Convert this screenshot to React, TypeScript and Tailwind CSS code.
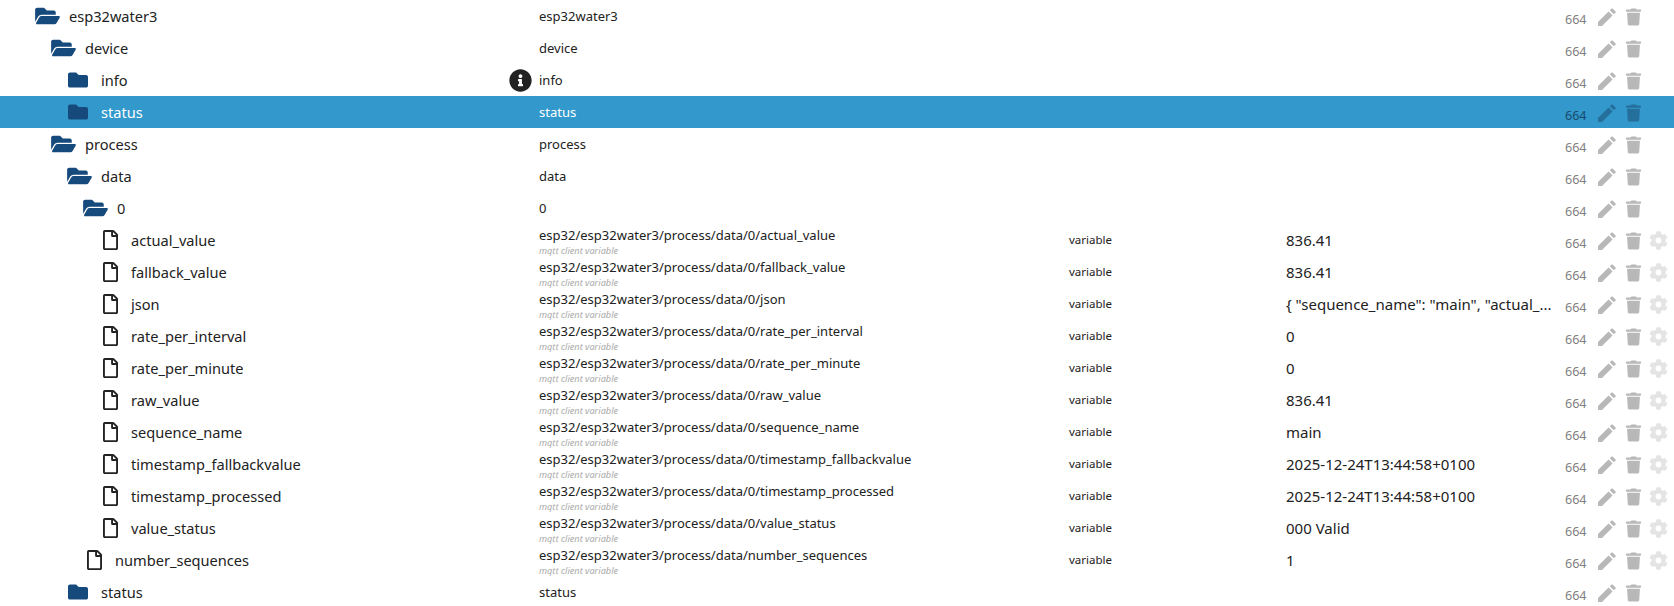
import { FaCog, FaFolder, FaFolderOpen, FaInfoCircle, FaRegFile, FaTrash } from "react-icons/fa";

type Row = {
  name: string;
  indent: string;
  icon: "open" | "closed" | "file";
  id?: string;
  value?: string;
  selected?: boolean;
  info?: boolean;
};

const base = "esp32/esp32water3/process/data/0/";

function leaf(name: string, value: string): Row {
  return { name, indent: "pl-[103px]", icon: "file", id: base + name, value };
}

const rows: Row[] = [
  { name: "esp32water3", indent: "pl-[35px]", icon: "open" },
  { name: "device", indent: "pl-[51px]", icon: "open" },
  { name: "info", indent: "pl-[67px]", icon: "closed", info: true },
  { name: "status", indent: "pl-[67px]", icon: "closed", selected: true },
  { name: "process", indent: "pl-[51px]", icon: "open" },
  { name: "data", indent: "pl-[67px]", icon: "open" },
  { name: "0", indent: "pl-[83px]", icon: "open" },
  leaf("actual_value", "836.41"),
  leaf("fallback_value", "836.41"),
  leaf("json", '{ "sequence_name": "main", "actual_...'),
  leaf("rate_per_interval", "0"),
  leaf("rate_per_minute", "0"),
  leaf("raw_value", "836.41"),
  leaf("sequence_name", "main"),
  leaf("timestamp_fallbackvalue", "2025-12-24T13:44:58+0100"),
  leaf("timestamp_processed", "2025-12-24T13:44:58+0100"),
  leaf("value_status", "000 Valid"),
  {
    name: "number_sequences",
    indent: "pl-[87px]",
    icon: "file",
    id: "esp32/esp32water3/process/data/number_sequences",
    value: "1",
  },
  { name: "status", indent: "pl-[67px]", icon: "closed" },
];

function PencilIcon({ className }: { className: string }) {
  return (
    <svg viewBox="0 0 18 18" fill="currentColor" className={className}>
      <path d="M0 14 L10.6 3.4 L14.6 7.4 L4 18 L0 18 Z" />
      <path d="M11.8 2.2 L13.6 0.4 Q14 0 14.5 0.4 L17.6 3.5 Q18 4 17.6 4.4 L15.8 6.2 Z" />
    </svg>
  );
}

function TreeIcon({ icon }: { icon: Row["icon"] }) {
  if (icon === "file") {
    return (
      <span className="flex w-[28px] shrink-0 justify-start">
        <FaRegFile className="h-[20px] w-[15px] text-[#222]" />
      </span>
    );
  }
  return (
    <span className="flex w-[34px] shrink-0 justify-start">
      {icon === "open" ? (
        <FaFolderOpen className="h-[22px] w-[25px] text-[#164a7c]" />
      ) : (
        <FaFolder className="h-[20px] w-[22px] text-[#164a7c]" />
      )}
    </span>
  );
}

function TreeRow({ row }: { row: Row }) {
  const muted = row.selected ? "text-[#246f9c]" : "text-[#b8b8b8]";
  return (
    <div className={row.selected ? "flex h-8 items-center bg-[#3399cc] text-white" : "flex h-8 items-center text-[#222]"}>
      <div className={`flex w-[539px] shrink-0 items-center pr-[7px] text-[14.6px] ${row.indent}`}>
        <TreeIcon icon={row.icon} />
        <span className="pt-[1px]">{row.name}</span>
        {row.info && <FaInfoCircle className="ml-auto h-[23px] w-[23px] text-[#222]" />}
      </div>
      <div className="w-[530px] shrink-0 text-[13px]">
        {row.id ? (
          <div className="h-8 pt-[3px]">
            <div className="leading-[16px]">{row.id}</div>
            <div className="text-[9.2px] italic leading-[16px] text-[#aaa]">mqtt client variable</div>
          </div>
        ) : (
          <div className="pt-[1px]">{row.name}</div>
        )}
      </div>
      <div className="w-[217px] shrink-0 text-[11.5px]">{row.id ? "variable" : ""}</div>
      <div className="w-[279px] shrink-0 truncate text-[15px]">{row.value}</div>
      <div className="flex h-8 items-start">
        <span className={row.selected ? "pt-[12px] text-[12.5px] leading-4 text-[#174a6e]" : "pt-[12px] text-[12.5px] leading-4 text-[#808080]"}>664</span>
        <PencilIcon className={`ml-[12px] mt-[8px] h-[18px] w-[18px] ${muted}`} />
        <FaTrash className={`ml-[10px] mt-[8px] h-[18px] w-[15px] ${muted}`} />
        {row.id && <FaCog className="ml-[8px] mt-[7px] h-[19px] w-[19px] text-[#e4e4e4]" />}
      </div>
    </div>
  );
}

export default function App() {
  return (
    <div className="h-[606px] w-[1674px] overflow-hidden bg-white font-['Noto_Sans',sans-serif]">
      {rows.map((row, i) => (
        <TreeRow key={i} row={row} />
      ))}
    </div>
  );
}
